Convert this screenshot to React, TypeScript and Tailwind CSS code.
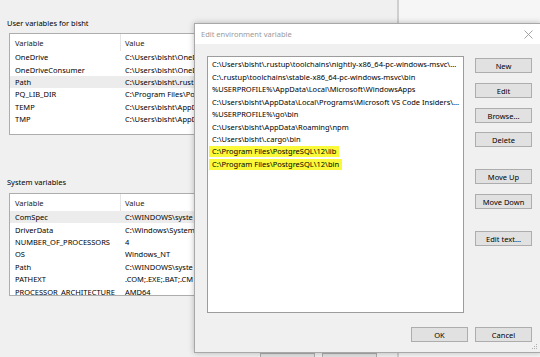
import React from "react";

const userVars: [string, string, boolean][] = [
  ["OneDrive", "C:\\Users\\bisht\\OneD", false],
  ["OneDriveConsumer", "C:\\Users\\bisht\\OneD", false],
  ["Path", "C:\\Users\\bisht\\.rust", true],
  ["PQ_LIB_DIR", "C:\\Program Files\\Po", false],
  ["TEMP", "C:\\Users\\bisht\\AppD", false],
  ["TMP", "C:\\Users\\bisht\\AppD", false],
];

const sysVars: [string, string, boolean][] = [
  ["ComSpec", "C:\\WINDOWS\\syste", true],
  ["DriverData", "C:\\Windows\\System", false],
  ["NUMBER_OF_PROCESSORS", "4", false],
  ["OS", "Windows_NT", false],
  ["Path", "C:\\WINDOWS\\syste", false],
  ["PATHEXT", ".COM;.EXE;.BAT;.CM", false],
  ["PROCESSOR_ARCHITECTURE", "AMD64", false],
];

const pathItems: [string, boolean][] = [
  ["C:\\Users\\bisht\\.rustup\\toolchains\\nightly-x86_64-pc-windows-msvc\\...", false],
  ["C:\\.rustup\\toolchains\\stable-x86_64-pc-windows-msvc\\bin", false],
  ["%USERPROFILE%\\AppData\\Local\\Microsoft\\WindowsApps", false],
  ["C:\\Users\\bisht\\AppData\\Local\\Programs\\Microsoft VS Code Insiders\\...", false],
  ["%USERPROFILE%\\go\\bin", false],
  ["C:\\Users\\bisht\\AppData\\Roaming\\npm", false],
  ["C:\\Users\\bisht\\.cargo\\bin", false],
  ["C:\\Program Files\\PostgreSQL\\12\\lib", true],
  ["C:\\Program Files\\PostgreSQL\\12\\bin", true],
];

function VarList({ rows, height }: { rows: [string, string, boolean][]; height: string }) {
  return (
    <div className={`ml-[2px] w-[390px] ${height} overflow-hidden border border-[#adadad] bg-white`}>
      <div className="flex h-[17px] items-center text-[#1a1a1a]">
        <div className="w-[110px] pl-[5px]">Variable</div>
        <div className="h-full w-px bg-[#e5e5e5]" />
        <div className="pl-[4px]">Value</div>
      </div>
      {rows.map(([k, v, sel]) => (
        <div
          key={k + v}
          className={`flex h-[12.4px] items-center whitespace-nowrap ${sel ? "bg-[#ececec]" : ""}`}
        >
          <div className="w-[115px] shrink-0 pl-[5px]">{k}</div>
          <div>{v}</div>
        </div>
      ))}
    </div>
  );
}

function Btn({ label, className = "" }: { label: string; className?: string }) {
  return (
    <div
      className={`flex h-[15px] w-[57px] items-center justify-center border border-[#adadad] bg-[#e1e1e1] text-black ${className}`}
    >
      {label}
    </div>
  );
}

export default function App() {
  return (
    <div
      className="relative flex h-[357px] w-[540px] overflow-hidden bg-[#f6f6f6] text-[7.5px] leading-[10px] text-black"
      style={{ fontFamily: "'Noto Sans', 'Open Sans', sans-serif" }}
    >
      {/* Background window */}
      <div className="flex h-full w-[399px] flex-col border-r-2 border-[#cfcfcf] bg-[#f0f0f0] pl-[7px] pt-[18px]">
        <div className="h-[10px]">User variables for bisht</div>
        <div className="mt-[5px]">
          <VarList rows={userVars} height="h-[102px]" />
        </div>
        <div className="mt-[42px] h-[10px]">System variables</div>
        <div className="mt-[6px]">
          <VarList rows={sysVars} height="h-[103px]" />
        </div>
        <div className="-ml-[7px] mt-[33px] h-px w-full bg-[#dcdcdc]" />
        <div className="ml-[253px] mt-[24px] flex gap-[7px]">
          <div className="h-[20px] w-[55px] border border-[#adadad] bg-[#e1e1e1]" />
          <div className="h-[20px] w-[55px] border border-[#adadad] bg-[#e1e1e1]" />
        </div>
      </div>
      <div className="flex-1" />

      {/* Edit environment variable dialog */}
      <div className="absolute left-[194px] top-[23px] flex h-[330px] w-[347px] flex-col border border-[#a8a8a8] bg-[#f0f0f0] shadow-[0_0_6px_rgba(0,0,0,0.25)]">
        <div className="flex h-[20px] items-center justify-between bg-white pl-[6px] pr-[6px] text-[#9a9a9a]">
          <span>Edit environment variable</span>
          <svg width="9" height="9" viewBox="0 0 9 9" className="mr-[1px]">
            <path d="M0.5 0.5 L8.5 8.5 M8.5 0.5 L0.5 8.5" stroke="#9a9a9a" strokeWidth="0.9" fill="none" />
          </svg>
        </div>
        <div className="flex flex-1 flex-col pl-[12px] pr-[8px] pt-[12px]">
          <div className="flex">
            <div className="h-[257px] w-[257px] border border-[#9c9c9c] bg-white pt-[1px]">
              {pathItems.map(([t, hl]) => (
                <div key={t} className="flex h-[12.5px] items-center whitespace-nowrap pl-[4px]">
                  {hl ? (
                    <span className="-ml-[3px] bg-[#f9f93a] px-[3px] leading-[11px]">{t}</span>
                  ) : (
                    <span>{t}</span>
                  )}
                </div>
              ))}
            </div>
            <div className="ml-[11px] mt-[2px] flex flex-col">
              <Btn label="New" />
              <Btn label="Edit" className="mt-[10px]" />
              <Btn label="Browse..." className="mt-[10px]" />
              <Btn label="Delete" className="mt-[9px]" />
              <Btn label="Move Up" className="mt-[22px]" />
              <Btn label="Move Down" className="mt-[10px]" />
              <Btn label="Edit text..." className="mt-[22px]" />
            </div>
          </div>
          <div className="mt-[14px] flex justify-end gap-[7px]">
            <Btn label="OK" className="w-[56px]" />
            <Btn label="Cancel" />
          </div>
        </div>
        <svg width="6" height="6" viewBox="0 0 6 6" className="absolute bottom-[2px] right-[2px]">
          <rect x="4" y="0" width="1" height="1" fill="#b0b0b0" />
          <rect x="2" y="2" width="1" height="1" fill="#b0b0b0" />
          <rect x="4" y="2" width="1" height="1" fill="#b0b0b0" />
          <rect x="0" y="4" width="1" height="1" fill="#b0b0b0" />
          <rect x="2" y="4" width="1" height="1" fill="#b0b0b0" />
          <rect x="4" y="4" width="1" height="1" fill="#b0b0b0" />
        </svg>
      </div>
    </div>
  );
}
